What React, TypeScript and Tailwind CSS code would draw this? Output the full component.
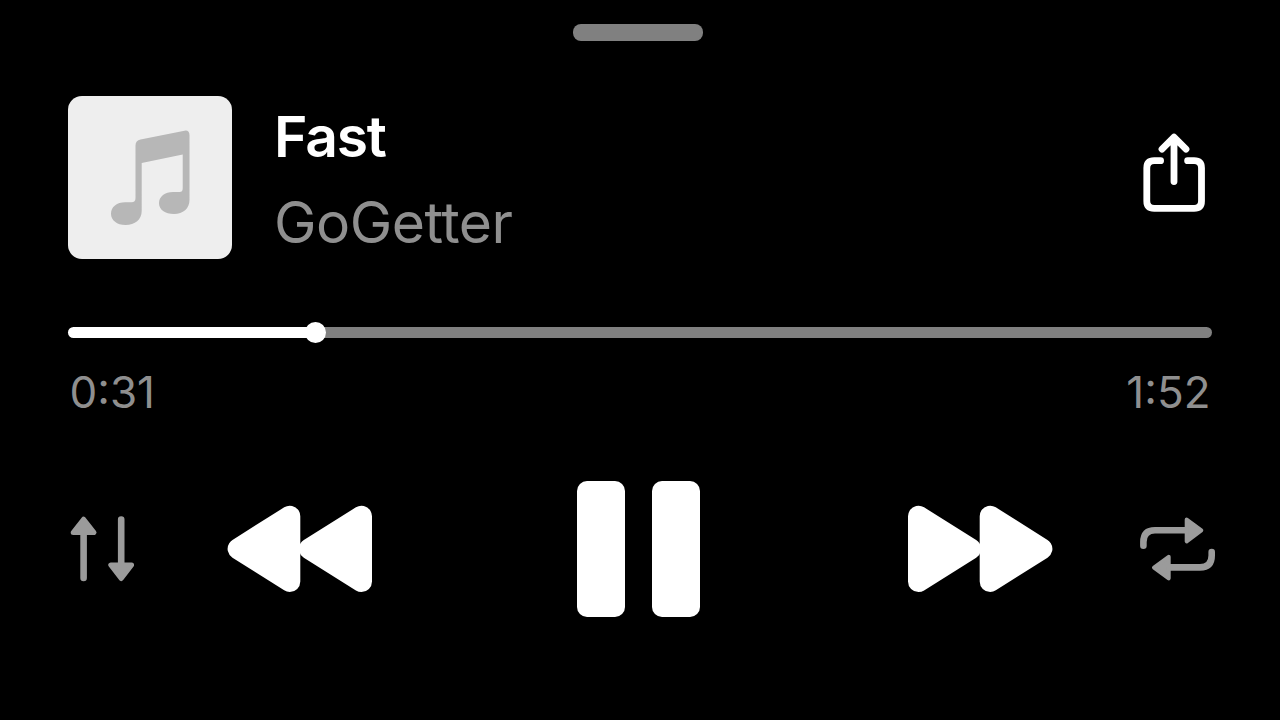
import type { ReactNode } from "react";

type IconButtonProps = {
  readonly label: string;
  readonly className?: string;
  readonly children: ReactNode;
};

function IconButton({ label, className, children }: IconButtonProps) {
  return (
    <button type="button" aria-label={label} className={className}>
      {children}
    </button>
  );
}

function NoteIcon() {
  return (
    <svg viewBox="68 96 164 164" className="h-[164px] w-[164px] text-[#b7b7b7]" fill="currentColor">
      <path d="M135.500 145.500Q135.500 140.600 140.500 139.500L184.500 130.700Q189.500 129.900 189.500 135.300V200C189.500 208.500 183 214 174 214C165 214 159 209.500 159 203.200C159 196.500 165 192 173 192H179.500Q182.700 192 182.700 188.500V154.500L141.700 163V211C141.700 219.500 135 225 125.500 225C117 225 111 220.500 111 213.800C111 207 117 202.300 125 202.300H131.500Q135.500 202.300 135.500 198Z" />
    </svg>
  );
}

function ShareIcon() {
  return (
    <svg
      viewBox="1140 130 68 84"
      className="h-[84px] w-[68px]"
      fill="none"
      stroke="currentColor"
      strokeWidth={6.8}
      strokeLinecap="round"
      strokeLinejoin="round"
    >
      <path d="M1160.600 160.700H1154.200Q1146.800 160.700 1146.800 168V201Q1146.800 208.300 1154.200 208.300H1194.100Q1201.500 208.300 1201.500 201V168Q1201.500 160.700 1194.100 160.700H1187.600" />
      <path d="M1174 181.500V137.500M1162 149.200L1174 137.200L1186 149.200" />
    </svg>
  );
}

function OrderIcon() {
  return (
    <svg
      viewBox="68 512 70 74"
      className="h-[74px] w-[70px]"
      fill="currentColor"
      stroke="currentColor"
      strokeLinecap="round"
      strokeLinejoin="round"
    >
      <path strokeWidth={6.6} d="M83.600 530V578M121.200 519.600V567" />
      <path strokeWidth={5} d="M83.600 519.200L94 532.600H73.200ZM121.200 578.500L110.800 564.900H131.600Z" />
    </svg>
  );
}

function RepeatIcon() {
  return (
    <svg
      viewBox="1138 512 80 74"
      className="h-[74px] w-[80px]"
      fill="none"
      stroke="currentColor"
      strokeLinecap="round"
      strokeLinejoin="round"
    >
      <path strokeWidth={6.6} d="M1143.400 545.700V542Q1143.400 530.200 1155 530.200H1188M1211.700 552V555.500Q1211.700 567.400 1200 567.400H1168" />
      <path
        fill="currentColor"
        strokeWidth={4}
        d="M1186.700 519.500L1201.300 530.300L1186.700 541.300ZM1168.700 556.800L1154 567.600L1168.700 578.300Z"
      />
    </svg>
  );
}

/** Two rounded triangles pointing left. Mirrored for fast forward. */
function SkipIcon() {
  return (
    <svg
      viewBox="227 504 146 90"
      className="h-[90px] w-[146px]"
      fill="currentColor"
      stroke="currentColor"
      strokeWidth={21}
      strokeLinejoin="round"
    >
      <path d="M289.800 516.200V581.500L238.100 548.800Z" />
      <path d="M361.500 516.200V581.500L309.400 548.800Z" />
    </svg>
  );
}

export default function App() {
  const progress = 21.62;

  return (
    <main className="flex h-[720px] w-[1280px] flex-col overflow-hidden bg-black px-[68px] font-['Inter',sans-serif] text-white">
      <div className="mt-[24.3px] ml-[505.3px] h-[17px] w-[130px] rounded-[8px] bg-[#808080]" />

      <header className="mt-[54.7px] flex h-[164px]">
        <div className="h-[163.5px] w-[164px] overflow-hidden rounded-[14px] bg-[#eeeeee]">
          <NoteIcon />
        </div>
        <div className="ml-[42px] flex-1 whitespace-nowrap">
          <h1 className="mt-[6px] text-[57px] leading-[70px] font-semibold tracking-[-1.2px]">Fast</h1>
          <p className="mt-[16px] text-[57px] leading-[70px] tracking-[-0.5px] text-[#8f8f8f]">GoGetter</p>
        </div>
        <IconButton label="Share" className="mt-[34px] mr-[4px] self-start">
          <ShareIcon />
        </IconButton>
      </header>

      <div className="mt-[62px] flex h-[21px] w-[1144px] items-center">
        <div className="h-[10.5px] rounded-l-full bg-white" style={{ width: `${progress}%` }} />
        <div className="z-10 -mx-[10px] h-[21px] w-[21px] rounded-full bg-white" />
        <div className="h-[10.5px] flex-1 rounded-r-full bg-[#808080]" />
      </div>

      <div className="mt-[19px] flex h-[60px] items-center justify-between pr-[1.5px] pl-[1.5px] text-[44px] leading-[60px] text-[#8f8f8f]">
        <span>0:31</span>
        <span>1:52</span>
      </div>

      <div className="mt-[58.3px] flex h-[137px] items-center">
        <IconButton label="Play order" className="text-[#9b9b9b]">
          <OrderIcon />
        </IconButton>
        <IconButton label="Rewind" className="ml-[89px]">
          <SkipIcon />
        </IconButton>
        <IconButton label="Pause" className="ml-[204px] flex gap-[27px]">
          <span className="h-[136.5px] w-[48px] rounded-[10px] bg-white" />
          <span className="h-[136.5px] w-[48px] rounded-[10px] bg-white" />
        </IconButton>
        <IconButton label="Fast forward" className="ml-[207px] -scale-x-100">
          <SkipIcon />
        </IconButton>
        <IconButton label="Repeat" className="-mr-[6px] ml-[85px] text-[#9b9b9b]">
          <RepeatIcon />
        </IconButton>
      </div>
    </main>
  );
}
